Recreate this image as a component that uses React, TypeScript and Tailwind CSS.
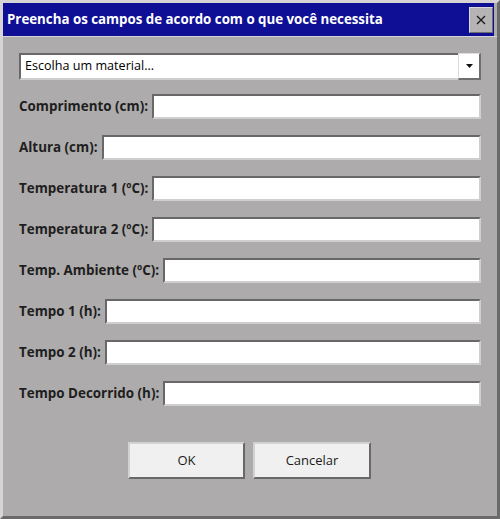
import React from 'react';

const fields = [
  'Comprimento (cm):',
  'Altura (cm):',
  'Temperatura 1 (ºC):',
  'Temperatura 2 (ºC):',
  'Temp. Ambiente (ºC):',
  'Tempo 1 (h):',
  'Tempo 2 (h):',
  'Tempo Decorrido (h):',
];

function Field({ label }: { label: string }) {
  return (
    <div className="flex h-[25px] items-center">
      <label className="mr-[4px] whitespace-nowrap text-[13.4px] font-bold text-[#1e1e1e]">{label}</label>
      <input
        type="text"
        className="h-[25px] flex-1 border-2 border-t-[#686868] border-l-[#686868] border-r-[#d0cfcf] border-b-[#d0cfcf] bg-white px-1 outline-none"
      />
    </div>
  );
}

export default function App() {
  return (
    <div
      className="flex h-[519px] w-[500px] flex-col border-t-[3px] border-l-[3px] border-r-[3px] border-b-[3px] border-t-[#d6d4d4] border-l-[#d6d4d4] border-r-[#6a6a6a] border-b-[#6a6a6a] bg-[#adabab]"
      style={{ fontFamily: '"Open Sans", "Noto Sans", sans-serif' }}
    >
      {/* Title bar */}
      <div className="mr-[3px] flex h-[33px] items-center justify-between bg-[#0f0f96] pl-[4px] pr-[1px]">
        <span className="text-[13.3px] font-bold text-white">Preencha os campos de acordo com o que você necessita</span>
        <button className="flex h-[26px] w-[24px] items-center justify-center border border-t-[#d8d8d8] border-l-[#d8d8d8] border-r-[#6e6e6e] border-b-[#6e6e6e] bg-[#b5b3b3]">
          <svg width="10" height="10" viewBox="0 0 10 10">
            <path d="M1 1 L9 9 M9 1 L1 9" stroke="#1a1a1a" strokeWidth="1.3" />
          </svg>
        </button>
      </div>
      <div className="h-px bg-[#d6d4d4]" />

      <div className="flex flex-1 flex-col pl-[16px] pr-[16px] pt-[16px]">
        {/* Material dropdown */}
        <div className="flex h-[27px]">
          <div className="flex flex-1 items-center border-2 border-r-0 border-t-[#686868] border-l-[#686868] border-b-[#d0cfcf] bg-white pl-[4px] text-[12.6px] text-black">
            Escolha um material...
          </div>
          <div className="flex w-[23px] items-center justify-center border border-t-[#dcdcdc] border-l-[#dcdcdc] border-r-2 border-b-2 border-r-[#6e6e6e] border-b-[#6e6e6e] bg-white">
            <svg width="7" height="4" viewBox="0 0 7 4">
              <path d="M0 0 H7 L3.5 4 Z" fill="#111" />
            </svg>
          </div>
        </div>

        <div className="mt-[14px] flex flex-col gap-[16px]">
          {fields.map((f) => (
            <Field key={f} label={f} />
          ))}
        </div>

        <div className="mt-[36px] flex justify-center gap-[8px] pr-[1px]">
          <button className="h-[37px] w-[117px] border-2 border-t-[#d2d2d2] border-l-[#d2d2d2] border-r-[#686868] border-b-[#686868] bg-[#f0f0f0] text-[13px] text-[#1a1a1a]">
            OK
          </button>
          <button className="h-[37px] w-[118px] border-2 border-t-[#d2d2d2] border-l-[#d2d2d2] border-r-[#686868] border-b-[#686868] bg-[#f0f0f0] text-[13px] text-[#1a1a1a]">
            Cancelar
          </button>
        </div>
      </div>
    </div>
  );
}
